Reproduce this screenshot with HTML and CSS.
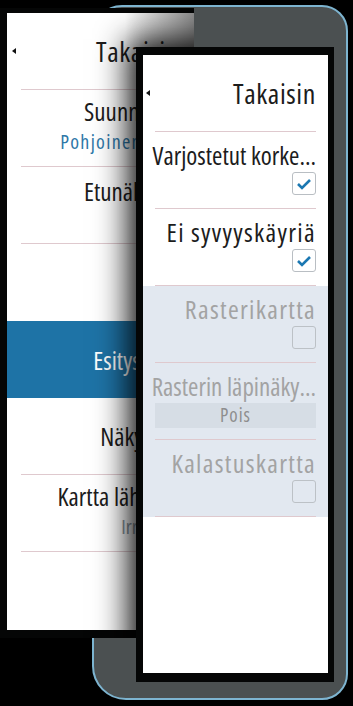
FILE: index.html
```html
<!DOCTYPE html>
<html lang="fi">
<head>
  <meta charset="UTF-8" />
  <meta name="viewport" content="width=device-width, initial-scale=1.0"/>
  <title>Kartta-asetukset</title>
  <link rel="stylesheet" href="styles.css">
</head>
<body>
  <div class="scene">
    <div class="frame"></div>

    <!-- back window, mostly covered -->
    <div class="win win-back">
      <div class="menu">
        <div class="item item-back">
          <span class="arrow"></span>
          <span class="title">Takaisin</span>
        </div>
        <div class="item">
          <span class="label">Suunnistus</span>
          <span class="value">Pohjoinen ylös</span>
        </div>
        <div class="item item-late">
          <span class="label">Etunäkymä</span>
        </div>
        <div class="item item-blank"></div>
        <div class="item item-selected">
          <span class="label">Esitystapa</span>
        </div>
        <div class="item item-center">
          <span class="label">Näkyvyys</span>
        </div>
        <div class="item">
          <span class="label">Kartta lähteitä</span>
          <span class="value muted">Irrotettu</span>
        </div>
      </div>
    </div>

    <!-- front window -->
    <div class="win win-front">
      <div class="menu">
        <div class="item item-back">
          <span class="arrow"></span>
          <span class="title">Takaisin</span>
        </div>
        <div class="item">
          <span class="label trim">Varjostetut korke...</span>
          <span class="check">
            <svg width="16" height="12" viewBox="0 0 16 12"><path d="M2 6 L6 10 L14 2" fill="none" stroke="#1b78b2" stroke-width="2.6"/></svg>
          </span>
        </div>
        <div class="item">
          <span class="label">Ei syvyyskäyriä</span>
          <span class="check">
            <svg width="16" height="12" viewBox="0 0 16 12"><path d="M2 6 L6 10 L14 2" fill="none" stroke="#1b78b2" stroke-width="2.6"/></svg>
          </span>
        </div>
        <div class="group-off">
          <div class="item">
            <span class="label">Rasterikartta</span>
            <span class="check"></span>
          </div>
          <div class="item">
            <span class="label trim">Rasterin läpinäky...</span>
            <span class="select">Pois</span>
          </div>
          <div class="item">
            <span class="label">Kalastuskartta</span>
            <span class="check"></span>
          </div>
        </div>
      </div>
    </div>
  </div>
</body>
</html>
```

FILE: styles.css
```css
body {
  margin: 0;
  background: #000;
  font-family: "Open Sans", "Noto Sans", sans-serif;
  font-stretch: 75%;
  color: #1c1c1c;
}
.scene {
  position: relative;
  width: 353px;
  height: 706px;
  overflow: hidden;
}
.frame {
  position: absolute;
  left: 92px;
  top: 5px;
  width: 256px;
  height: 695px;
  box-sizing: border-box;
  background: #4b5051;
  border: 2px solid #7db4d0;
  border-radius: 30px 26px 26px 34px;
}
.win {
  position: absolute;
  box-sizing: border-box;
  background: #050606;
}
.win-back {
  left: 0;
  top: 8px;
  width: 194px;
  height: 630px;
  padding: 5px 0 8px 7px;
  overflow: hidden;
}
/* shadow the front window throws on the back one */
.win-back::after {
  content: "";
  position: absolute;
  left: 136px;
  top: 39px;
  width: 198px;
  height: 635px;
  box-shadow: 0 0 30px 8px rgba(0,0,0,0.9);
}
.win-back .menu {
  background: linear-gradient(to right, #fff 118px, #8c8c8c 187px);
}
.win-front {
  left: 136px;
  top: 47px;
  width: 198px;
  height: 635px;
  padding: 8px 6px 9px 7px;
}
.menu {
  background: #fff;
  height: 100%;
}
.item {
  height: 67px;
  margin: 0 12px;
  border-bottom: 1px solid #dfc9ce;
  display: flex;
  flex-direction: column;
  align-items: flex-end;
  padding-top: 9px;
}
.win-back .item {
  margin: 0 15px 0 14px;
  padding-top: 7px;
  height: 69px;
}
.item-back,
.win-back .item-back {
  flex-direction: row;
  justify-content: space-between;
  align-items: center;
  padding-top: 0;
  height: 76px;
}
.arrow {
  width: 0;
  height: 0;
  margin-left: -9px;
  border-top: 3.5px solid transparent;
  border-bottom: 3.5px solid transparent;
  border-right: 4px solid #111;
}
.title {
  font-size: 28px;
  line-height: 30px;
  letter-spacing: 0.6px;
}
.label {
  font-size: 25px;
  line-height: 28px;
  white-space: nowrap;
}
.win-front .label {
  font-size: 26px;
  letter-spacing: 1.3px;
}
.win-front .label.trim {
  font-size: 25px;
  letter-spacing: 0;
}
.value {
  font-size: 20px;
  line-height: 24px;
  margin-top: 5px;
  color: #2f78a8;
  white-space: nowrap;
  letter-spacing: 1.3px;
}
.value.muted {
  color: #8a96a0;
  letter-spacing: 0;
}
.win-back .item-late {
  padding-top: 10px;
  height: 66px;
}
.win-back .item-blank {
  border-bottom: none;
  height: 77px;
  padding-top: 0;
}
.win-back .item-selected {
  margin: 0;
  padding: 0 15px 0 0;
  height: 77px;
  border-bottom: none;
  justify-content: center;
  background: #1e73a6;
  color: #fff;
}
.win-back .item-center {
  justify-content: center;
  padding-top: 0;
  height: 76px;
}
.check {
  width: 24px;
  height: 23px;
  margin-top: 3px;
  box-sizing: border-box;
  border: 1px solid #b9bec3;
  border-radius: 3px;
  background: #fff;
  display: flex;
  align-items: center;
  justify-content: center;
}
.group-off {
  background: #e2e8f0;
  color: #a3a3a3;
}
.group-off .check {
  background: transparent;
  border-color: #bcc1c6;
}
.select {
  align-self: stretch;
  height: 25px;
  margin-top: 3px;
  background: #d6dde5;
  color: #8e8e8e;
  font-size: 19px;
  line-height: 25px;
  text-align: center;
  letter-spacing: 1px;
}
```
